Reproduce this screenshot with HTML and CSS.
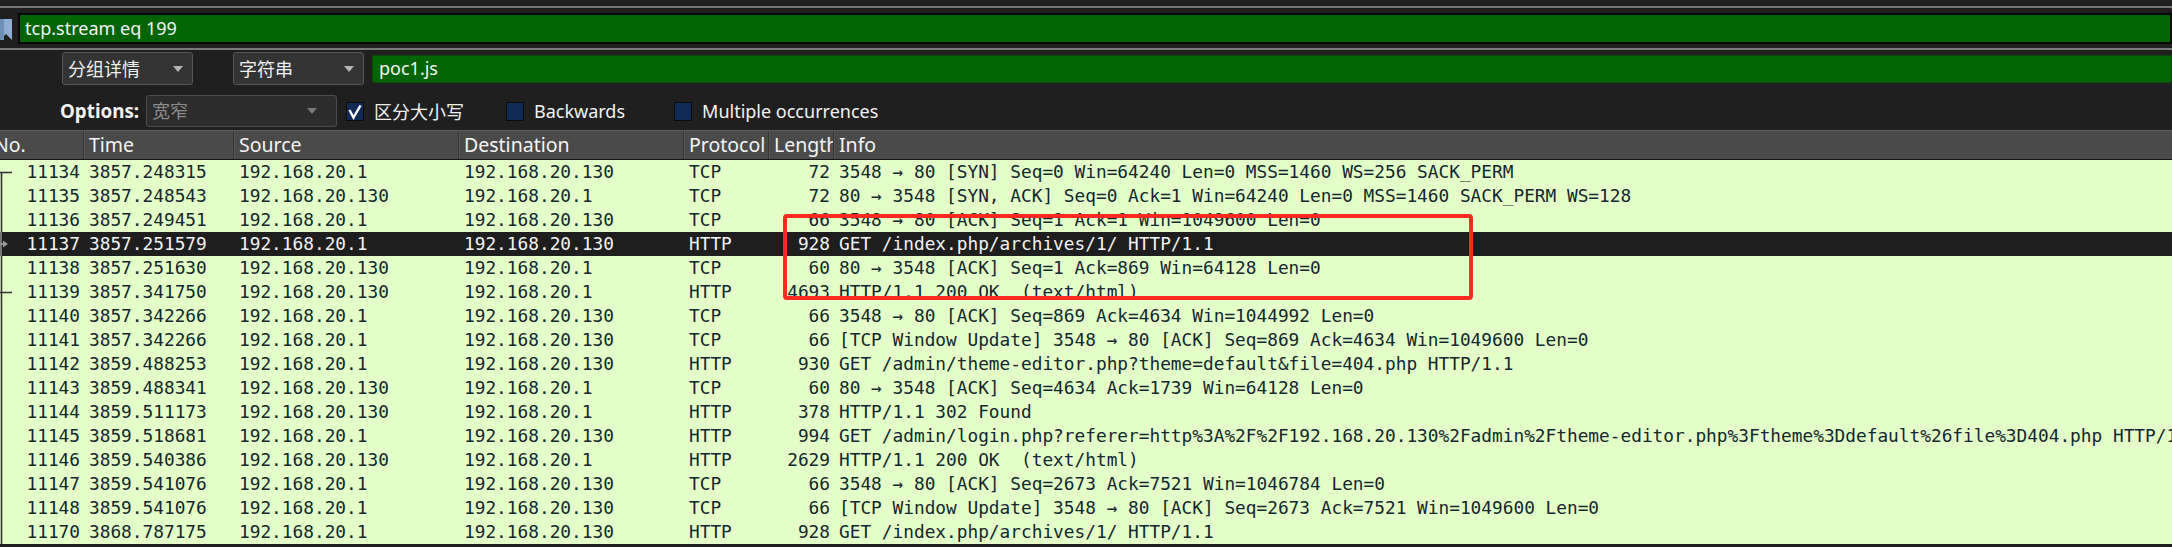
FILE: index.html
```html
<!DOCTYPE html>
<html>
<head>
<meta charset="utf-8">
<link rel="stylesheet" href="styles.css">
</head>
<body>
<div class="app">
  <div class="topstrip"></div>
  <div class="filterbar">
    <svg class="bookmark" width="13" height="22" viewBox="0 0 13 22"><polygon points="0,0 12,0 12,21 6,15 0,21" fill="#8eaed3"/><rect x="0" y="0" width="4" height="21" fill="#6f8fb5"/></svg>
    <div class="filter-input">tcp.stream eq 199</div>
  </div>
  <div class="sep"></div>
  <div class="findrow">
    <div class="combo w1"><span>分组详情</span><i class="caret"></i></div>
    <div class="combo w2"><span>字符串</span><i class="caret"></i></div>
    <div class="find-input">poc1.js</div>
  </div>
  <div class="optrow">
    <span class="opt-label">Options:</span>
    <div class="combo w3 disabled"><span>宽窄</span><i class="caret"></i></div>
    <label class="check c1"><span class="box"><svg width="18" height="19" viewBox="0 0 18 19"><path d="M3.5 8 L7.5 15.5 L14.5 3.5" fill="none" stroke="#fff" stroke-width="2.4"/></svg></span>区分大小写</label>
    <label class="check c2"><span class="box"></span>Backwards</label>
    <label class="check c3"><span class="box"></span>Multiple occurrences</label>
  </div>
  <div class="packetlist">
    <div class="head">
      <span class="h-no">No.</span><span>Time</span><span>Source</span><span>Destination</span><span>Protocol</span><span>Length</span><span>Info</span>
    </div>
    <div class="row"><span class="no"><svg class="mk" width="14" height="24"><path d="M0 12.5 H12 M1.5 12 V24" stroke="#333" stroke-width="1.6" fill="none"/></svg><b>11134</b></span><span>3857.248315</span><span>192.168.20.1</span><span>192.168.20.130</span><span>TCP</span><span class="len">72</span><span>3548 → 80 [SYN] Seq=0 Win=64240 Len=0 MSS=1460 WS=256 SACK_PERM</span></div>
    <div class="row"><span class="no"><svg class="mk" width="14" height="24"><path d="M1.5 0 V24" stroke="#333" stroke-width="1.6"/></svg><b>11135</b></span><span>3857.248543</span><span>192.168.20.130</span><span>192.168.20.1</span><span>TCP</span><span class="len">72</span><span>80 → 3548 [SYN, ACK] Seq=0 Ack=1 Win=64240 Len=0 MSS=1460 SACK_PERM WS=128</span></div>
    <div class="row"><span class="no"><svg class="mk" width="14" height="24"><path d="M1.5 0 V24" stroke="#333" stroke-width="1.6"/></svg><b>11136</b></span><span>3857.249451</span><span>192.168.20.1</span><span>192.168.20.130</span><span>TCP</span><span class="len">66</span><span>3548 → 80 [ACK] Seq=1 Ack=1 Win=1049600 Len=0</span></div>
    <div class="row sel"><span class="no"><svg class="mk" width="14" height="24"><path d="M1 0 V24" stroke="#8a8a8a" stroke-width="1.6"/><path d="M0 12 H4" stroke="#9a9a9a" stroke-width="1.6"/><polygon points="3,8.5 8,12 3,15.5" fill="#9a9a9a"/></svg><b>11137</b></span><span>3857.251579</span><span>192.168.20.1</span><span>192.168.20.130</span><span>HTTP</span><span class="len">928</span><span>GET /index.php/archives/1/ HTTP/1.1</span></div>
    <div class="row"><span class="no"><svg class="mk" width="14" height="24"><path d="M1.5 0 V24" stroke="#333" stroke-width="1.6"/></svg><b>11138</b></span><span>3857.251630</span><span>192.168.20.130</span><span>192.168.20.1</span><span>TCP</span><span class="len">60</span><span>80 → 3548 [ACK] Seq=1 Ack=869 Win=64128 Len=0</span></div>
    <div class="row"><span class="no"><svg class="mk" width="14" height="24"><path d="M1.5 0 V24 M0 12.5 H12" stroke="#333" stroke-width="1.6"/></svg><b>11139</b></span><span>3857.341750</span><span>192.168.20.130</span><span>192.168.20.1</span><span>HTTP</span><span class="len">4693</span><span>HTTP/1.1 200 OK  (text/html)</span></div>
    <div class="row"><span class="no"><svg class="mk" width="14" height="24"><path d="M1.5 0 V24" stroke="#333" stroke-width="1.6"/></svg><b>11140</b></span><span>3857.342266</span><span>192.168.20.1</span><span>192.168.20.130</span><span>TCP</span><span class="len">66</span><span>3548 → 80 [ACK] Seq=869 Ack=4634 Win=1044992 Len=0</span></div>
    <div class="row"><span class="no"><svg class="mk" width="14" height="24"><path d="M1.5 0 V24" stroke="#333" stroke-width="1.6"/></svg><b>11141</b></span><span>3857.342266</span><span>192.168.20.1</span><span>192.168.20.130</span><span>TCP</span><span class="len">66</span><span>[TCP Window Update] 3548 → 80 [ACK] Seq=869 Ack=4634 Win=1049600 Len=0</span></div>
    <div class="row"><span class="no"><svg class="mk" width="14" height="24"><path d="M1.5 0 V24" stroke="#333" stroke-width="1.6"/></svg><b>11142</b></span><span>3859.488253</span><span>192.168.20.1</span><span>192.168.20.130</span><span>HTTP</span><span class="len">930</span><span>GET /admin/theme-editor.php?theme=default&amp;file=404.php HTTP/1.1</span></div>
    <div class="row"><span class="no"><svg class="mk" width="14" height="24"><path d="M1.5 0 V24" stroke="#333" stroke-width="1.6"/></svg><b>11143</b></span><span>3859.488341</span><span>192.168.20.130</span><span>192.168.20.1</span><span>TCP</span><span class="len">60</span><span>80 → 3548 [ACK] Seq=4634 Ack=1739 Win=64128 Len=0</span></div>
    <div class="row"><span class="no"><svg class="mk" width="14" height="24"><path d="M1.5 0 V24" stroke="#333" stroke-width="1.6"/></svg><b>11144</b></span><span>3859.511173</span><span>192.168.20.130</span><span>192.168.20.1</span><span>HTTP</span><span class="len">378</span><span>HTTP/1.1 302 Found</span></div>
    <div class="row"><span class="no"><svg class="mk" width="14" height="24"><path d="M1.5 0 V24" stroke="#333" stroke-width="1.6"/></svg><b>11145</b></span><span>3859.518681</span><span>192.168.20.1</span><span>192.168.20.130</span><span>HTTP</span><span class="len">994</span><span>GET /admin/login.php?referer=http%3A%2F%2F192.168.20.130%2Fadmin%2Ftheme-editor.php%3Ftheme%3Ddefault%26file%3D404.php HTTP/1.1</span></div>
    <div class="row"><span class="no"><svg class="mk" width="14" height="24"><path d="M1.5 0 V24" stroke="#333" stroke-width="1.6"/></svg><b>11146</b></span><span>3859.540386</span><span>192.168.20.130</span><span>192.168.20.1</span><span>HTTP</span><span class="len">2629</span><span>HTTP/1.1 200 OK  (text/html)</span></div>
    <div class="row"><span class="no"><svg class="mk" width="14" height="24"><path d="M1.5 0 V24" stroke="#333" stroke-width="1.6"/></svg><b>11147</b></span><span>3859.541076</span><span>192.168.20.1</span><span>192.168.20.130</span><span>TCP</span><span class="len">66</span><span>3548 → 80 [ACK] Seq=2673 Ack=7521 Win=1046784 Len=0</span></div>
    <div class="row"><span class="no"><svg class="mk" width="14" height="24"><path d="M1.5 0 V24" stroke="#333" stroke-width="1.6"/></svg><b>11148</b></span><span>3859.541076</span><span>192.168.20.1</span><span>192.168.20.130</span><span>TCP</span><span class="len">66</span><span>[TCP Window Update] 3548 → 80 [ACK] Seq=2673 Ack=7521 Win=1049600 Len=0</span></div>
    <div class="row"><span class="no"><svg class="mk" width="14" height="24"><path d="M1.5 0 V24" stroke="#333" stroke-width="1.6"/></svg><b>11170</b></span><span>3868.787175</span><span>192.168.20.1</span><span>192.168.20.130</span><span>HTTP</span><span class="len">928</span><span>GET /index.php/archives/1/ HTTP/1.1</span></div>
    <div class="redbox"></div>
  </div>
</div>
</body>
</html>
```

FILE: styles.css
```css
* { box-sizing: border-box; }
html, body { margin: 0; padding: 0; }
body {
  width: 2172px;
  height: 547px;
  overflow: hidden;
  background: #1f1f1f;
  font-family: "Noto Sans", "Noto Sans CJK SC", sans-serif;
  font-size: 18px;
  color: #f2f2f2;
}
.app { position: relative; width: 2172px; height: 547px; }

.topstrip {
  box-sizing: content-box;
  height: 6px;
  border-bottom: 2px solid #767676;
  margin-bottom: 5px;
}

.filterbar {
  display: flex;
  align-items: center;
  height: 31px;
}
.bookmark { flex: none; margin-right: 5px; margin-top: 2px; }
.filter-input {
  flex: 1;
  height: 31px;
  background: #006400;
  border: 2px solid #050505;
  color: #f4f4f4;
  padding-left: 5px;
  line-height: 26px;
  font-size: 18px;
}

.sep {
  height: 2px;
  margin-top: 4px;
  background: #7a7a7a;
}

.findrow {
  display: flex;
  align-items: center;
  height: 33px;
  margin-top: 2px;
}
.combo {
  height: 33px;
  display: flex;
  align-items: center;
  justify-content: space-between;
  background: #333333;
  border: 1px solid #565656;
  border-radius: 3px;
  padding: 0 9px 0 5px;
  color: #f0f0f0;
}
.combo span { line-height: 1; }
.caret {
  width: 0; height: 0;
  border-left: 5.5px solid transparent;
  border-right: 5.5px solid transparent;
  border-top: 6px solid #b4b4b4;
}
.w1 { width: 131px; margin-left: 62px; }
.w2 { width: 131px; margin-left: 40px; }
.find-input {
  flex: 1;
  margin-left: 8px;
  height: 28px;
  background: #006400;
  border: 1px solid #0c4a0c;
  border-radius: 2px;
  padding-left: 6px;
  line-height: 25px;
  color: #f4f4f4;
}

.optrow {
  display: flex;
  align-items: center;
  height: 32px;
  margin-top: 10px;
}
.opt-label { margin-left: 60px; font-weight: bold; font-size: 18.8px; width: 86px; }
.w3 {
  width: 191px;
  height: 32px;
  background: #2c2c2c;
  border-color: #4c4c4c;
  color: #8a8a8a;
}
.w3 .caret { border-top-color: #7a7a7a; margin-right: 10px; }
.check { display: flex; align-items: center; color: #f2f2f2; }
.box {
  width: 18px; height: 19px;
  background: #0f2a55;
  border: 1px solid #0b0b0b;
  margin-right: 10px;
  display: block;
  overflow: hidden;
}
.box svg { display: block; margin: -1px; }
.c1 { margin-left: 9px; }
.c2 { margin-left: 42px; }
.c3 { margin-left: 49px; }

.packetlist { margin-top: 3px; position: relative; }
.head, .row {
  display: grid;
  grid-template-columns: 83px 150px 225px 225px 85px 65px 1fr;
}
.head {
  height: 30px;
  background: #4a4a4a;
  border-top: 1px solid #5e5e5e;
  border-bottom: 1px solid #151515;
  font-size: 19.5px;
  line-height: 27px;
  color: #f4f4f4;
}
.head span {
  overflow: hidden;
  white-space: nowrap;
  padding-left: 5px;
  border-left: 1px solid #373737;
  box-shadow: inset 1px 0 0 #555;
}
.head .h-no { border-left: 0; box-shadow: none; padding-left: 0; text-indent: -6px; }

.row {
  height: 24px;
  line-height: 24px;
  background: #e4ffc7;
  color: #12272e;
  font-family: "DejaVu Sans Mono", monospace;
  font-size: 17.8px;
  white-space: pre;
}
.row > span { overflow: hidden; padding-left: 6px; }
.row > .no { display: flex; padding-left: 0; }
.row .mk { flex: none; display: block; }
.row .no b { flex: 1; font-weight: normal; text-align: right; padding-right: 3px; }
.row > .len { text-align: right; padding-left: 0; padding-right: 3px; }
.row > span:last-child { overflow: visible; }
.row.sel { background: #1e1e1e; color: #f2f2f2; }

.redbox {
  position: absolute;
  left: 783px;
  top: 84px;
  width: 690px;
  height: 86px;
  border: 4px solid #fb2a1f;
  border-radius: 4px;
}
```
